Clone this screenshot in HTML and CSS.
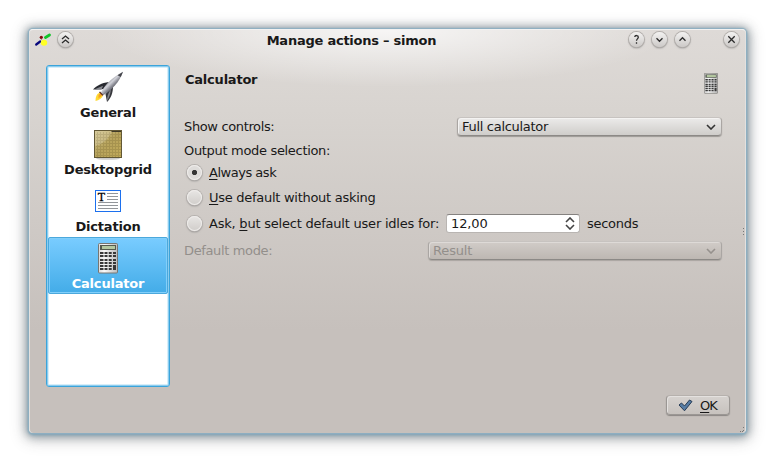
FILE: index.html
```html
<!DOCTYPE html>
<html lang="en">
<head>
<meta charset="utf-8">
<title>Manage actions – simon</title>
<link rel="stylesheet" href="styles.css">
</head>
<body>
<svg width="0" height="0" class="defs" aria-hidden="true">
  <defs>
    <linearGradient id="body" x2="1" y2="0"><stop offset="0" stop-color="#d8d8d8"/><stop offset=".3" stop-color="#fafafa"/><stop offset="1" stop-color="#bbb"/></linearGradient>
    <linearGradient id="steel" x1=".25" y1=".25" x2=".75" y2=".8"><stop offset="0" stop-color="#55565d"/><stop offset=".4" stop-color="#d2d3da"/><stop offset=".6" stop-color="#85868f"/><stop offset="1" stop-color="#2b2c32"/></linearGradient>
    <linearGradient id="gold" x2="1" y2="1"><stop offset="0" stop-color="#cfc189"/><stop offset=".5" stop-color="#b7a35c"/><stop offset="1" stop-color="#c2aa58"/></linearGradient>
    <symbol id="calc" viewBox="0 0 20 31">
      <rect x=".5" y=".5" width="19" height="29.500" rx="1" fill="url(#body)" stroke="#777672"/>
      <rect x="2" y="2" width="16" height="5" fill="#555a4e"/><rect x="4" y="3" width="13" height="3" fill="#b4c8a0"/>
      <g fill="#383838">
        <path d="M2 9h3.500v2H2zM6.500 9h3v2h-3zM10.700 9h3v2h-3zM15 9h3v2h-3zM2 12h3.500v2H2zM6.500 12h3v2h-3zM10.700 12h3v2h-3zM15 12h3v2h-3zM2 16h3.500v2H2zM6.500 16h3v2h-3zM10.700 16h3v2h-3zM15 16h3v2h-3zM2 19h3.500v2H2zM6.500 19h3v2h-3zM10.700 19h3v2h-3zM15 19h3v2h-3zM2 22h3.500v2H2zM6.500 22h3v2h-3zM10.700 22h3v2h-3zM2 25h3.500v2H2zM6.500 25h3v2h-3zM10.700 25h3v2h-3zM15 22h3v5h-3z"/>
      </g>
    </symbol>
  </defs>
</svg>
<main class="window">
  <header class="titlebar">
    <svg class="app-icon" viewBox="0 0 17 14"><path d="M2.200 11.500l4-3" stroke="#08087c" stroke-width="2.200" stroke-linecap="round"/><path d="M11.500 4.500l4-2.500" stroke="#12c52b" stroke-width="2.800" stroke-linecap="round"/><path d="M6 5l3 3" stroke="#999"/><circle cx="7.300" cy="4.300" r="1.600" fill="#870b10"/><ellipse cx="10" cy="9.800" rx="3.200" ry="3" fill="#ffff25"/></svg>
    <span class="round shade"><svg viewBox="0 0 15 15"><path d="M4 7l3.500-3L11 7M4 11l3.500-3 3.500 3"/></svg></span>
    <h1 class="title">Manage actions – simon</h1>
    <div class="controls">
      <span class="round"><svg viewBox="0 0 15 15"><path d="M5.700 5C6 3 9.300 3 9.300 5.200 9.300 7 7.500 6.800 7.500 8.800M7.500 10.300v1.400"/></svg></span>
      <span class="round"><svg viewBox="0 0 15 15"><path d="M4.500 6.300l3 3 3-3"/></svg></span>
      <span class="round"><svg viewBox="0 0 15 15"><path d="M4.500 8.700l3-3 3 3"/></svg></span>
      <span class="round close"><svg viewBox="0 0 15 15"><path d="M4.300 4.300l6.400 6.400M10.700 4.300l-6.400 6.400"/></svg></span>
    </div>
  </header>
  <div class="content">
    <nav class="pages">
      <a class="page">
        <svg width="32" height="32" viewBox="0 0 32 32"><path d="M5.500 23l3-2 2.500 3.500c-1 3-4 4.500-7.500 5.500 0-3 .5-5 2-7z" fill="#ffd932"/><path d="M6.500 24l2-2 1.500 2.500-3.500 3z" fill="#f5a023"/><path d="M1 18.500C5 14.500 9 12 17 11l-5 7z" fill="#27292f"/><path d="M1.500 18.800l9.500-4-1.500 4z" fill="#85868d"/><path d="M21 15c0 7-2 12-6 16l-1.500-8z" fill="#36373c"/><path d="M15 30c0-4 1-8 4-12-.5 5-2 9-4 12z" fill="#85868b"/><path d="M9 21.500C12 15 20 6.500 31 .8 27.500 11 20 19 11.500 24z" fill="url(#steel)"/><path d="M25.500 4.200L31 .8 28.800 6z" fill="#44454b"/><path d="M8 20.500l3.500 3.500-1 .8-3.500-3.500z" fill="#55292a"/></svg>
        <span>General</span>
      </a>
      <a class="page">
        <svg width="32" height="32" viewBox="0 0 32 32"><ellipse cx="16" cy="30.500" rx="12" ry="1.300" fill="#ccc"/><rect x="2.500" y="2.500" width="27" height="27" fill="url(#gold)" stroke="#625835"/><path d="M5.500 4v25M8.500 4v25M11.500 4v25M14.500 4v25M17.500 4v25M20.500 4v25M23.500 4v25M26.500 4v25M4 6.500h25M4 9.500h25M4 12.500h25M4 15.500h25M4 18.500h25M4 21.500h25M4 24.500h25M4 27.500h25" stroke="#84733a" opacity=".35"/><path d="M3 3h17C17 11 11 16 3 18z" fill="#fff" opacity=".18"/><path d="M20 3h9v1H19z" fill="#403b28"/></svg>
        <span>Desktopgrid</span>
      </a>
      <a class="page">
        <svg width="32" height="32" viewBox="0 0 32 32"><rect x="3.500" y="5.500" width="25" height="21" fill="#fff" stroke="#1c70ee"/><path d="M15 8.500h11M15 11.500h11M15 14.500h11M6 17.500h20M6 20.500h20M6 23.500h20" stroke="#92969a"/><text x="5.800" y="16" class="letter">T</text></svg>
        <span>Dictation</span>
      </a>
      <a class="page selected">
        <svg width="32" height="32" viewBox="0 0 32 32"><use href="#calc" x="6" y="1" width="20" height="31"/></svg>
        <span>Calculator</span>
      </a>
    </nav>
    <section class="settings">
      <div class="heading"><h2>Calculator</h2><svg width="14" height="21" viewBox="0 0 20 31" preserveAspectRatio="none"><use href="#calc" width="20" height="31"/></svg></div>
      <div class="row show"><span>Show controls:</span><div class="combo full"><span>Full calculator</span><svg class="chevron" viewBox="0 0 10 6"><path d="M1 1l4 4 4-4"/></svg></div></div>
      <div class="row output">Output mode selection:</div>
      <label class="row always"><i class="radio checked"></i><span><u>A</u>lways ask</span></label>
      <label class="row default"><i class="radio"></i><span><u>U</u>se default without asking</span></label>
      <div class="row idle"><i class="radio"></i><span class="idle-label">Ask, <u>b</u>ut select default user idles for:</span><div class="spin"><span>12,00</span><svg viewBox="0 0 10 13"><path d="M1 5l4-4 4 4M1 8l4 4 4-4"/></svg></div><span>seconds</span></div>
      <div class="row mode"><span>Default mode:</span><div class="combo result"><span>Result</span><svg class="chevron" viewBox="0 0 10 6"><path d="M1 1l4 4 4-4"/></svg></div></div>
    </section>
  </div>
  <footer class="actions"><button class="ok"><svg width="15" height="13" viewBox="0 0 15 13"><path d="M1 6l2.500-2 3 3L11.500 1 14 2.500 6.500 11.800z" fill="#567ca4" stroke="#263b54" stroke-linejoin="round"/></svg><span><u>O</u>K</span></button></footer>
  <svg class="side-grip" viewBox="0 0 2 8"><path d="M0 0h1v1H0zM0 3h1v1H0zM0 6h1v1H0z" fill="#777"/></svg>
  <svg class="corner-grip" viewBox="0 0 6 6"><path d="M4 0h1v1H4zM4 3h1v1H4zM1 4h1v1H1zM3 4h1v1H3z" fill="#777"/></svg>
</main>
</body>
</html>
```
FILE: styles.css
```css
* { box-sizing: border-box; }
body { margin: 0; padding: 29px; width: 775px; height: 462px; overflow: hidden; background: #fff; color: #191919; font: 13px/20px "DejaVu Sans", sans-serif; letter-spacing: -.28px; }
.defs { position: absolute; }
.window { position: relative; width: 717px; height: 404px; border-radius: 4px; border: 1px solid #e3e1df; border-bottom: 0; border-top-color: #f3f2f1; background: radial-gradient(ellipse 285px 57px at 50% 0, rgba(255,255,255,.75), rgba(255,255,255,0)), linear-gradient(#dedad7, #d8d4d0 80px, #c6c0bc 300px); box-shadow: 0 0 1px 1px #8eb0c2, 0 1px 3px 1px #7da6bb, 0 1px 8px 3px rgba(75,95,110,.5), 0 3px 15px 4px rgba(60,60,60,.25); }
.titlebar { height: 35px; display: grid; grid-template-columns: 28px 80px 1fr 130px; align-items: start; }
.app-icon { width: 17px; height: 14px; margin: 3px 0 0 4px; fill: none; }
.round { display: block; width: 15px; height: 15px; margin-top: 2px; border-radius: 50%; background: linear-gradient(#f3f2f1, #ccc9c7); box-shadow: 0 0 0 1px #b3afac, 0 1px 2px #777; }
.round svg { display: block; width: 15px; height: 15px; fill: none; stroke: #2b2b2b; stroke-width: 1.3; }
.title { margin: 1px 0 0; padding-right: 50px; text-align: center; font-size: 13px; line-height: 20px; letter-spacing: -.24px; }
.controls { display: flex; gap: 8px; justify-content: flex-end; padding-right: 6px; }
.close { margin-left: 26px; }
.content { display: flex; height: 322px; padding-left: 16px; gap: 14px; }
.pages { width: 124px; height: 322px; padding: 3px 1px; border: 1px solid #3ba4da; border-radius: 3px; background: #fff; box-shadow: inset 0 0 0 1px #8bccef, inset 0 0 0 2px #d7eef9; }
.page { display: flex; flex-direction: column; align-items: center; height: 57px; padding-top: 2px; font-weight: bold; line-height: 19px; letter-spacing: -.18px; }
.page svg { display: block; flex: none; }
.selected { margin-top: -3px; padding-top: 4px; color: #fff; background: linear-gradient(#79ccff, #43ace8); border: 1px solid #4ba8dc; border-radius: 2px; box-shadow: inset 0 0 0 1px #82cffa; }
.letter { font: 12px "Liberation Serif", serif; stroke: #000; stroke-width: .3px; }
.settings { width: 538px; }
.heading { display: flex; justify-content: space-between; height: 52px; padding: 8px 4px 0 1px; }
h2 { margin: -3px 0 0; font-size: 13px; line-height: 20px; letter-spacing: -.22px; }
.row { display: flex; align-items: center; height: 20px; }
.show, .mode { justify-content: space-between; letter-spacing: -.36px; }
.output { margin-top: 4px; letter-spacing: -.32px; }
.always { margin-top: 2px; letter-spacing: -.48px; }
.default { margin-top: 5px; }
.idle { margin-top: 6px; }
.idle-label { width: 230px; white-space: nowrap; letter-spacing: -.22px; }
.mode { margin-top: 7px; color: #938f8b; }
u { text-underline-offset: 2px; text-decoration-thickness: 1px; text-decoration-skip-ink: none; }
.combo { align-self: flex-start; display: flex; align-items: center; justify-content: space-between; height: 19px; padding: 0 5px 0 4px; border: 1px solid #aaa6a3; border-top-color: #c7c3c0; border-bottom-color: #8c8986; border-radius: 4px; background: linear-gradient(#ecebea, #cfcdca); box-shadow: inset 1px 1px #f4f3f2, 0 1px 1px #9c9895; letter-spacing: -.3px; }
.combo span { position: relative; top: .5px; }
.full { width: 265px; }
.result { width: 294px; background: linear-gradient(#d1ccc8, #bdb7b2); box-shadow: inset 1px 1px #dedad7, 0 1px 1px #aaa5a1; letter-spacing: -.15px; }
.chevron { width: 10px; height: 6px; fill: none; stroke: #343434; stroke-width: 1.6; }
.result .chevron { stroke: #96918d; }
.radio { width: 15px; height: 15px; flex: none; margin: 0 7px 1px 3px; border-radius: 50%; background: linear-gradient(#e8e6e4, #d0cdca); box-shadow: inset 0 0 0 1px #eeecea, 0 0 0 1px #b6b2af, 0 1px 2px #777; }
.checked { background: radial-gradient(circle, #363636 0 2.2px, #dedcda 3px); }
.spin { align-self: flex-start; width: 134px; height: 19px; margin: 0 7px; padding: 0 4px; display: flex; justify-content: space-between; align-items: center; border: 1px solid #b9b5b2; border-top-color: #858280; border-radius: 3px; background: #fff; letter-spacing: -.1px; }
.spin svg { width: 10px; height: 13px; fill: none; stroke: #444; stroke-width: 1.6; }
.actions { display: flex; justify-content: flex-end; padding: 8px 15px 0 0; }
.ok { display: flex; align-items: center; gap: 7px; width: 64px; height: 20px; padding: 0 0 0 11px; border: 1px solid #9b9794; border-top-color: #b6b1ad; border-radius: 4px; background: linear-gradient(#d6d2cf, #c7c2be); box-shadow: inset 1px 1px #e4e1df, 0 1px 1px #8b8784; font: 13px/18px "DejaVu Sans", sans-serif; letter-spacing: -1px; color: #191919; }
.ok span { position: relative; top: 1px; }
.side-grip { position: absolute; right: 0; top: 198px; width: 2px; height: 8px; }
.corner-grip { position: absolute; right: 0; bottom: 0; width: 6px; height: 6px; }
```
